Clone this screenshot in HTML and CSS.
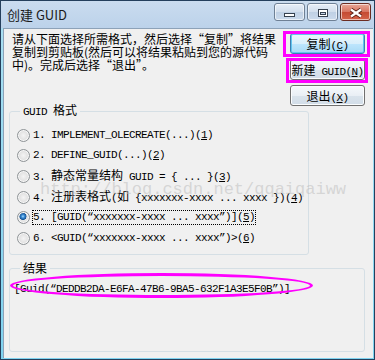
FILE: index.html
```html
<!DOCTYPE html>
<html>
  <head>
    <meta charset="UTF-8" />
    <title>创建 GUID</title>
    <link rel="stylesheet" href="styles.css">
  </head>
  <body>
    <div class="window">
      <div class="titlebar">
        <span class="title">创建 GUID</span>
        <div class="caption-buttons">
          <span class="cap min">
            <svg width="11" height="4"><rect x="0.5" y="0.5" width="10" height="3" fill="#fff" stroke="#36414f" /></svg>
          </span>
          <span class="cap max">
            <svg width="10" height="8"><rect x="0.5" y="0.5" width="9" height="7" fill="#fff" stroke="#36414f" /><rect x="2.5" y="3.5" width="5" height="2" fill="#c8d6e8" stroke="#36414f" /></svg>
          </span>
          <span class="cap close">
            <svg width="14" height="10"><path d="M2 1.5 L12 8.5 M12 1.5 L2 8.5" stroke="#5b1d14" stroke-width="4" /><path d="M2 1.5 L12 8.5 M12 1.5 L2 8.5" stroke="#fff" stroke-width="2.2" /></svg>
          </span>
        </div>
      </div>

      <div class="client">
        <div class="top">
          <p class="intro">请从下面选择所需格式，然后选择<span class="q">“</span>复制<span class="q">”</span>将结果复制到剪贴板(然后可以将结果粘贴到您的源代码中)。完成后选择<span class="q">“</span>退出<span class="q">”</span>。</p>
          <div class="buttons">
            <button class="btn default"><span class="cn">复制</span>(<u>C</u>)</button>
            <button class="btn"><span class="cn">新建</span> GUID(<u>N</u>)</button>
            <button class="btn"><span class="cn">退出</span>(<u>X</u>)</button>
          </div>
        </div>

        <fieldset class="group formats">
          <legend>GUID <span class="cn">格式</span></legend>
          <div class="option"><span class="radio"></span><span class="text">1. IMPLEMENT_OLECREATE(...)(<u>1</u>)</span></div>
          <div class="option"><span class="radio"></span><span class="text">2. DEFINE_GUID(...)(<u>2</u>)</span></div>
          <div class="option"><span class="radio"></span><span class="text">3. <span class="cn">静态常量结构</span> GUID = { ... }(<u>3</u>)</span></div>
          <div class="option"><span class="radio"></span><span class="text">4. <span class="cn">注册表格式</span>(<span class="cn">如</span> {xxxxxxx-xxxx ... xxxx })(<u>4</u>)</span></div>
          <div class="option"><span class="radio checked"></span><span class="text focus">5. [GUID(“xxxxxxx-xxxx ... xxxx”)](<u>5</u>)</span></div>
          <div class="option"><span class="radio"></span><span class="text">6. &lt;GUID(“xxxxxxx-xxxx ... xxxx”)&gt;(<u>6</u>)</span></div>
        </fieldset>

        <fieldset class="group result">
          <legend><span class="cn">结果</span></legend>
          <div class="guid">[Guid(“DEDDB2DA-E6FA-47B6-9BA5-632F1A3E5F0B”)]</div>
        </fieldset>
      </div>

      <!-- overlays: watermark and hand-drawn marks -->
      <div class="watermark">http://blog.csdn.net/qqaiqaiww</div>
      <div class="mark mark-copy"></div>
      <div class="mark mark-new"></div>
      <div class="mark ellipse"></div>
    </div>
  </body>
</html>
```

FILE: styles.css
```css
body {
  margin: 0;
  background: #1e3c58;
}
.window {
  position: relative;
  width: 375px;
  height: 360px;
  box-sizing: border-box;
  border: 1px solid #243f5c;
  background: linear-gradient(#cadcef, #bcd2ea 27px, #a9dff2 27px, #7fd3f0);
  display: flex;
  flex-direction: column;
  overflow: hidden;
  font-family: "Liberation Mono", "Noto Sans CJK SC", monospace;
  font-size: 11px;
  letter-spacing: -0.6px;
  color: #000;
}
.cn {
  font-family: "Noto Sans CJK SC", sans-serif;
  font-size: 12px;
  letter-spacing: 0;
}

/* title bar */
.titlebar {
  height: 27px;
  flex: none;
  display: flex;
  justify-content: space-between;
  align-items: flex-start;
  padding: 0 3px 0 6px;
}
.title {
  font-family: "Noto Sans CJK SC", sans-serif;
  font-size: 13px;
  letter-spacing: 0;
  line-height: 27px;
  color: #1b1b1b;
}
.caption-buttons {
  display: flex;
  gap: 2px;
  margin-top: 2px;
}
.cap {
  width: 31px;
  height: 18px;
  box-sizing: border-box;
  padding-top: 2px;
  border: 1px solid #6e8095;
  border-radius: 3px;
  background: linear-gradient(#e6eef8, #d2deec 50%, #bfd0e4 51%, #cbdaec);
  box-shadow: inset 0 0 0 1px rgba(255, 255, 255, 0.6);
  display: flex;
  align-items: center;
  justify-content: center;
}
.cap svg {
  display: block;
}
.cap.min {
  align-items: flex-end;
  padding-bottom: 3px;
}
.cap.close {
  border-color: #6b2c22;
  background: linear-gradient(#e8a797, #d7735f 50%, #c54a32 51%, #d3644a);
}

/* client area */
.client {
  flex: 1;
  margin: 0 1px 1px 2px;
  border-top: 1px solid #8da2b8;
  border-left: 1px solid #8da2b8;
  background: #f0f0f0;
  padding: 0 8px 0 5px;
}
.top {
  display: flex;
  justify-content: space-between;
  align-items: flex-start;
}
.intro {
  margin: 3px 0 0 3px;
  width: 266px;
  font-family: "Noto Sans CJK SC", sans-serif;
  font-size: 12px;
  line-height: 13px;
  letter-spacing: 0;
}
.q {
  font-feature-settings: "fwid";
}
.buttons {
  display: flex;
  flex-direction: column;
  gap: 5px;
  margin-top: 4px;
}
.btn {
  width: 75px;
  height: 21px;
  padding: 0;
  font: inherit;
  letter-spacing: inherit;
  color: #000;
  border: 1px solid #707070;
  border-radius: 3px;
  background: linear-gradient(#f6f9fc, #e9eff5 50%, #d9e3ec 51%, #d2dde8);
  box-shadow: inset 0 0 0 1px #fbfdfe;
}
.btn.default {
  border-color: #3c7fb1;
  background: linear-gradient(#e9f6fd, #d9effb 50%, #bee6fd 51%, #a7d9f5);
  box-shadow: inset 0 0 0 1px #62c4ef;
}
.btn u {
  text-underline-offset: 1px;
}

/* group boxes */
.group {
  margin: 0;
  min-inline-size: 0;
  border: 1px solid #d5dfe5;
  border-radius: 3px;
}
.group legend {
  padding: 0 3px;
  line-height: 13px;
}
.formats {
  width: 300px;
  box-sizing: border-box;
  margin-top: -3px;
  padding: 6px 0 5px 7px;
}
.formats legend {
  margin-left: 3px;
}
.option {
  display: flex;
  align-items: center;
  height: 20.6px;
}
.option .text {
  line-height: 13px;
  white-space: nowrap;
}
.option u {
  text-underline-offset: 1px;
}
.text.focus {
  outline: 1px dotted #000;
}
.radio {
  width: 13px;
  height: 13px;
  box-sizing: border-box;
  margin-right: 3px;
  border: 1px solid #8f9497;
  border-radius: 50%;
  background: radial-gradient(circle, #f4f4f4 0, #e2e2e2 55%, #c9caca 100%);
  box-shadow: inset 0 0 0 1px #f7f7f7;
}
.radio.checked {
  background:
    radial-gradient(circle at 45% 40%, #a9dcff 0, #3b8ed6 1.5px, #185494 3.3px, transparent 3.8px),
    radial-gradient(circle, #f4f4f4 0, #e2e2e2 55%, #c9caca 100%);
}
.result {
  margin-top: 6px;
  padding: 6px 0 55px 4px;
}
.result legend {
  margin-left: 6px;
}
.guid {
  line-height: 13px;
  white-space: nowrap;
}

/* overlays */
.watermark {
  position: absolute;
  left: 39px;
  top: 180px;
  font-family: "Liberation Mono", monospace;
  font-size: 17px;
  line-height: 17px;
  letter-spacing: 0;
  color: rgba(190, 190, 190, 0.55);
  pointer-events: none;
}
.mark {
  position: absolute;
  box-sizing: border-box;
  border: 3px solid #f0f;
  pointer-events: none;
}
.mark-copy {
  left: 282px;
  top: 30px;
  width: 87px;
  height: 26px;
}
.mark-new {
  left: 285px;
  top: 57px;
  width: 82px;
  height: 25px;
}
.ellipse {
  left: 9px;
  top: 272px;
  width: 303px;
  height: 25px;
  border-radius: 50%;
}
```
